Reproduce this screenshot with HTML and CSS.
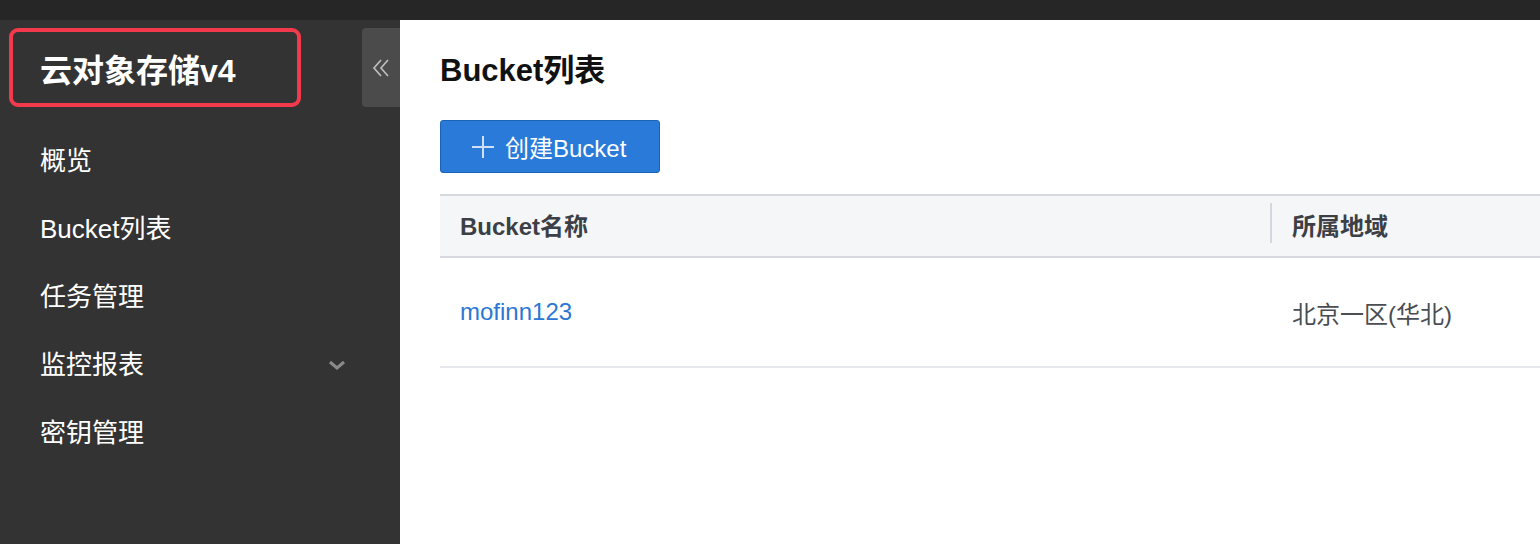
FILE: index.html
```html
<!DOCTYPE html>
<html lang="zh">
<head>
<meta charset="utf-8">
<link rel="stylesheet" href="styles.css">
</head>
<body>
<div class="topbar"></div>
<div class="layout">
  <aside class="sidebar">
    <div class="side-head">
      <div class="logo">云对象存储v4</div>
      <div class="collapse">
        <svg width="18" height="18" viewBox="0 0 18 18"><path d="M9 1 L2 9 L9 17 M16 1 L9 9 L16 17" fill="none" stroke="#bdbdbd" stroke-width="1.7"/></svg>
      </div>
    </div>
    <nav class="nav">
      <div class="nav-item">概览</div>
      <div class="nav-item">Bucket列表</div>
      <div class="nav-item">任务管理</div>
      <div class="nav-item has-sub">监控报表
        <svg class="chev" width="18" height="12" viewBox="0 0 18 12"><path d="M2 3 L9 9 L16 3" fill="none" stroke="#8a8a8a" stroke-width="3"/></svg>
      </div>
      <div class="nav-item">密钥管理</div>
    </nav>
  </aside>
  <main class="main">
    <h1 class="title">Bucket列表</h1>
    <button class="btn">
      <svg width="22" height="22" viewBox="0 0 22 22"><path d="M11 0 V22 M0 11 H22" stroke="#cfe0f7" stroke-width="2"/></svg>
      <span>创建Bucket</span>
    </button>
    <div class="table">
      <div class="thead">
        <div class="th c1">Bucket名称</div>
        <div class="th c2"><span class="sep"></span>所属地域</div>
      </div>
      <div class="tr">
        <div class="td c1"><span class="link">mofinn123</span></div>
        <div class="td c2">北京一区(华北)</div>
      </div>
    </div>
  </main>
</div>
</body>
</html>
```

FILE: styles.css
```css
* { box-sizing: border-box; }
html, body { margin: 0; padding: 0; }
body {
  width: 1540px;
  height: 544px;
  overflow: hidden;
  font-family: "Liberation Sans", "Noto Sans CJK SC", sans-serif;
  background: #fff;
}
.topbar { height: 20px; background: #262626; }
.layout { display: flex; height: 524px; }
.sidebar { width: 400px; background: #333333; flex: none; }
.side-head {
  display: flex;
  justify-content: space-between;
  align-items: flex-start;
  padding-top: 8px;
  padding-left: 9px;
}
.logo {
  width: 292px;
  height: 79px;
  border: 4px solid #f23a4c;
  border-radius: 9px;
  padding-left: 27px;
  display: flex;
  align-items: center;
  color: #fff;
  font-size: 32px;
  font-weight: bold;
}
.collapse {
  width: 38px;
  height: 79px;
  background: #4b4b4b;
  border-radius: 4px 0 0 4px;
  display: flex;
  align-items: center;
  justify-content: center;
}
.nav { margin-top: 20px; }
.nav-item {
  height: 68px;
  line-height: 68px;
  padding-left: 40px;
  padding-right: 54px;
  color: #fff;
  font-size: 26px;
  display: flex;
  align-items: center;
  justify-content: space-between;
}
.main { flex: 1; padding: 31px 0 0 40px; }
.title {
  margin: 0;
  font-size: 31px;
  line-height: 40px;
  font-weight: bold;
  color: #111;
}
.btn {
  margin-top: 29px;
  width: 220px;
  height: 53px;
  background: #2a7bd9;
  border: 1px solid #1c62b5;
  border-radius: 3px;
  color: #fff;
  font-family: inherit;
  font-size: 24px;
  display: flex;
  align-items: center;
  padding: 0 0 0 31px;
  gap: 11px;
}
.table { margin-top: 21px; }
.thead {
  display: flex;
  height: 64px;
  background: #f5f6f8;
  border-top: 2px solid #d6d9e0;
  border-bottom: 2px solid #d6d9e0;
  align-items: center;
  padding-bottom: 3px;
}
.th { font-size: 24px; font-weight: bold; color: #3c3f45; }
.c1 { width: 830px; padding-left: 20px; flex: none; }
.c2 { flex: 1; padding-left: 22px; position: relative; }
.sep {
  position: absolute;
  left: 0;
  top: -4px;
  width: 2px;
  height: 40px;
  background: #d3d7de;
}
.tr {
  display: flex;
  height: 110px;
  align-items: center;
  border-bottom: 2px solid #e4e7eb;
}
.td { font-size: 24px; color: #4a4d52; }
.link { color: #2c77d3; }
```
